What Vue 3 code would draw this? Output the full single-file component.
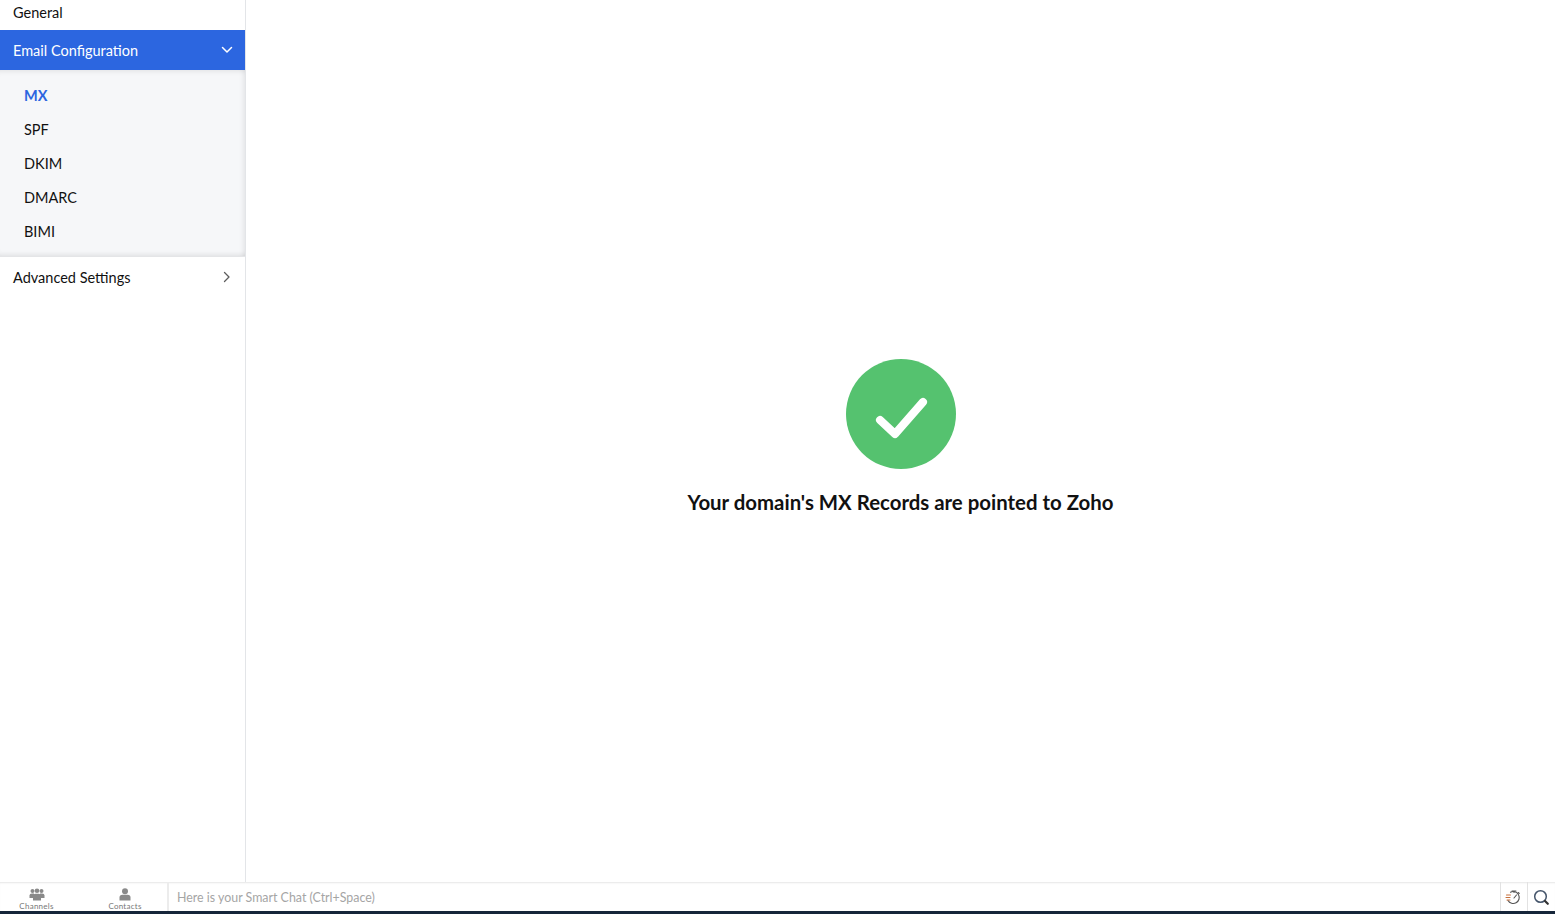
<script setup>
const subs = ['MX', 'SPF', 'DKIM', 'DMARC', 'BIMI']
</script>

<template>
  <div class="app">
    <div class="main">
      <aside class="side">
        <div class="row general">General</div>
        <div class="row active">
          <span>Email Configuration</span>
          <svg class="chev down" width="12" height="8" viewBox="0 0 12 8"><path d="M1.500 1.500 6 6l4.500-4.500" fill="none" stroke="#fff" stroke-width="1.500" stroke-linecap="round" stroke-linejoin="round"/></svg>
        </div>
        <ul class="sub">
          <li v-for="(s, i) in subs" :key="s" :class="{ on: i === 0 }">{{ s }}</li>
        </ul>
        <div class="row adv">
          <span>Advanced Settings</span>
          <svg class="chev right" width="8" height="12" viewBox="0 0 8 12"><path d="M1.500 1.500 6 6l-4.500 4.500" fill="none" stroke="#5d5d5d" stroke-width="1.300" stroke-linecap="round" stroke-linejoin="round"/></svg>
        </div>
      </aside>
      <main class="content">
        <svg class="ok" width="110" height="110" viewBox="0 0 110 110">
          <circle cx="55" cy="55" r="55" fill="#55c26f"/>
          <path d="M34 61 L49 75 L77 43" fill="none" stroke="#fff" stroke-width="8" stroke-linecap="round" stroke-linejoin="round"/>
        </svg>
        <h1>Your domain's MX Records are pointed to Zoho</h1>
      </main>
    </div>
    <footer class="bar">
      <div class="tabs">
        <div class="tab">
          <svg width="16" height="13" viewBox="0 0 16 13" fill="#8a8a8a">
            <circle cx="3.500" cy="3" r="2"/><circle cx="12.500" cy="3" r="2"/><circle cx="8" cy="2.800" r="2.300"/>
            <path d="M0.500 10V7.500Q0.500 5.500 3 5.500H5V10Z"/><path d="M15.500 10V7.500Q15.500 5.500 13 5.500H11V10Z"/>
            <path d="M4 12.500V8Q4 5.800 6.500 5.800H9.500Q12 5.800 12 8V12.500Z"/>
          </svg>
          <span>Channels</span>
        </div>
        <div class="tab">
          <svg width="12" height="13" viewBox="0 0 12 13" fill="#8a8a8a">
            <circle cx="6" cy="3.200" r="3"/>
            <path d="M0.500 12.500V9.500Q0.500 6.800 3.500 6.800H8.500Q11.500 6.800 11.500 9.500V12.500Z"/>
          </svg>
          <span>Contacts</span>
        </div>
      </div>
      <div class="input">Here is your Smart Chat (Ctrl+Space)</div>
      <div class="tool">
        <svg width="16" height="16" viewBox="0 0 16 16" fill="none" stroke="#555" stroke-width="1.100" stroke-linecap="round">
          <path d="M5.500 3.200A6 6 0 1 1 3 11.500"/>
          <path d="M7 2h4M9 2v1.500M13.200 3.500l1 1"/>
          <path d="M9 9l2.500-3"/>
          <path d="M1.500 6h4M1 8.500h4M2 11h3" stroke="#c8703c"/>
        </svg>
      </div>
      <div class="tool search">
        <svg width="17" height="17" viewBox="0 0 17 17" fill="none">
          <circle cx="7.500" cy="7.500" r="5.800" stroke="#44546a" stroke-width="1.500"/>
          <path d="M12 12l2.800 2.800" stroke="#333" stroke-width="2.200" stroke-linecap="round"/>
        </svg>
      </div>
    </footer>
    <div class="strip"></div>
  </div>
</template>

<style>
html, body { margin: 0; background: #fff; }
</style>

<style scoped>
.app {
  height: 914px;
  display: flex;
  flex-direction: column;
  overflow: hidden;
  font-family: Lato, "Open Sans", sans-serif;
  color: #111;
}
.main { flex: 1; display: flex; min-height: 0; }
.side {
  width: 246px;
  box-sizing: border-box;
  flex: none;
  border-right: 1px solid #e3e5e8;
}
.row {
  display: flex;
  align-items: center;
  justify-content: space-between;
  padding: 0 13px;
  font-size: 14.500px;
}
.general { height: 25px; margin-bottom: 5px; }
.active { height: 40px; background: #2c66e0; color: #fff; }
.down { margin-right: -1px; }
.right { margin-right: 1px; }
.sub {
  list-style: none;
  margin: 0;
  padding: 9px 0 7px;
  height: 187px;
  box-sizing: border-box;
  background: #f6f7f9;
  box-shadow: inset 0 6px 6px -6px rgba(0,0,0,.12), inset -6px 0 6px -6px rgba(0,0,0,.12), inset 0 -6px 6px -6px rgba(0,0,0,.14);
  border-bottom: 1px solid #e4e5e7;
}
.sub li {
  height: 34px;
  line-height: 34px;
  padding-left: 24px;
  font-size: 14.500px;
}
.sub li.on { color: #2c66e0; font-weight: 700; }
.adv { height: 40px; }
.content {
  flex: 1;
  display: flex;
  flex-direction: column;
  align-items: center;
  padding-top: 359px;
  box-sizing: border-box;
}
.ok { display: block; }
h1 {
  margin: 19px 0 0;
  font-size: 20.400px;
  line-height: 28px;
  font-weight: 700;
  color: #111;
}
.bar {
  height: 29px;
  flex: none;
  display: flex;
  align-items: stretch;
  background: #fff;
  box-shadow: inset 0 2px 2px -1px rgba(0,0,0,.1);
}
.tabs { width: 168px; flex: none; display: flex; box-sizing: border-box; }
.tab {
  width: 73px;
  flex: none;
  display: flex;
  flex-direction: column;
  align-items: center;
  padding-top: 6px;
  box-sizing: border-box;
  overflow: hidden;
}
.tab + .tab { width: 72px; margin-left: 16px; }
.tab span {
  font-size: 8px;
  line-height: 10px;
  color: #777;
  letter-spacing: .25px;
}
.input {
  flex: 1;
  border-left: 2px solid #ececec;
  margin-left: -1px;
  padding-left: 8px;
  font-size: 12.400px;
  line-height: 31px;
  color: #a5a5a5;
}
.tool {
  width: 27px;
  flex: none;
  border-left: 1px solid #e2e2e2;
  display: flex;
  align-items: center;
  justify-content: center;
  box-sizing: border-box;
}
.tool svg { position: relative; left: -1px; }
.search { width: 28px; }
.search svg { position: relative; top: 1px; left: 0; }
.strip { height: 3px; flex: none; background: #16263a; }
</style>
